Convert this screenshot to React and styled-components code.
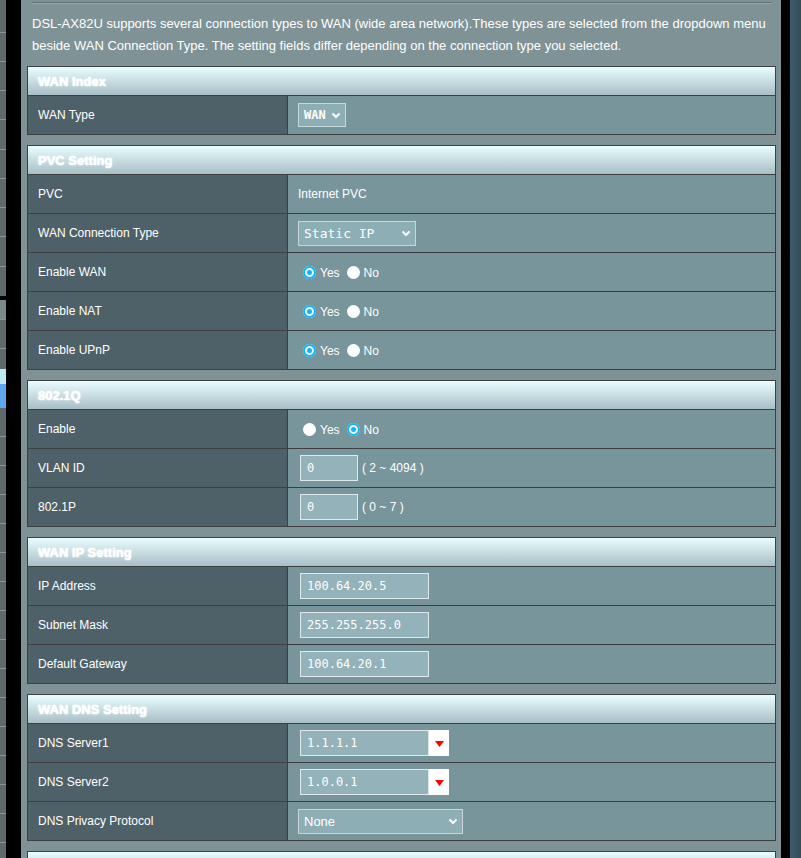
import React from "react";
import styled, { createGlobalStyle } from "styled-components";

const GlobalStyle = createGlobalStyle`
  html, body { margin: 0; padding: 0; background: #000; }
  body { font-family: "Liberation Sans", Arial, sans-serif; overflow: hidden; }
  * { box-sizing: border-box; }
`;

const Frame = styled.div`
  display: flex;
  width: 801px;
  height: 858px;
  overflow: hidden;
  background: #000;
`;

const SideMenu = styled.div`
  width: 6px;
  display: flex;
  flex-direction: column;
  flex: none;
`;

const MenuGroup = styled.div`
  display: flex;
  flex-direction: column;
  background: #5e6a6b;
  margin-top: ${(p) => p.$gap || 0}px;
  border-radius: ${(p) => (p.$rounded ? "0 4px 0 0" : "0")};
  flex: ${(p) => (p.$grow ? 1 : "none")};
`;

const MenuItem = styled.div`
  height: ${(p) => p.$h}px;
  flex: none;
  background: ${(p) => p.$bg || "#5e6a6b"};
  border-bottom: ${(p) => (p.$line ? "1px solid #8a9597" : "none")};
`;

const Spacer = styled.div`
  width: ${(p) => p.$w}px;
  flex: none;
  background: ${(p) => p.$bg || "#000"};
`;

const Main = styled.main`
  width: 760px;
  flex: none;
  background: #7f9296;
  padding: 2px 5px 0 6px;
`;

const TopRule = styled.div`
  height: 1px;
  margin: 0 4px 0 5px;
  background: #5f6e72;
  box-shadow: 0 1px 0 #9aa8ab;
`;

const Description = styled.p`
  margin: 10px 4px 9px 5px;
  color: #fff;
  font-size: 13px;
  line-height: 22px;
`;

const Table = styled.section`
  width: 749px;
  border: 1px solid #3d3f40;
  margin-bottom: 10px;
`;

const Header = styled.div`
  height: 29px;
  border-bottom: 1px solid #3d3f40;
  background: linear-gradient(#e9feff, #a8bec6);
  color: #fff;
  font-weight: bold;
  font-size: 13px;
  padding-left: 10px;
  display: flex;
  align-items: center;
  text-shadow: 0 0 1px #ffffff, 0 0 2px #ffffff;
`;

const Row = styled.div`
  display: grid;
  grid-template-columns: 260px 1fr;
  height: 39px;
  border-bottom: 1px solid #3d3f40;
  &:last-child { border-bottom: none; height: 38px; }
`;

const Label = styled.div`
  background: #4f6168;
  border-right: 1px solid #3d3f40;
  color: #fff;
  font-size: 12px;
  padding-left: 10px;
  display: flex;
  align-items: center;
`;

const Value = styled.div`
  background: #78959b;
  color: #fff;
  font-size: 12px;
  padding-left: 10px;
  display: flex;
  align-items: center;
`;

const SelectBox = styled.div`
  width: ${(p) => p.$w}px;
  height: ${(p) => p.$h || 25}px;
  border: 1px solid #c8d6d9;
  background: #8eaeb5;
  color: #fff;
  display: flex;
  align-items: center;
  justify-content: space-between;
  padding: 0 4px 0 5px;
  font-family: ${(p) => (p.$mono ? '"DejaVu Sans Mono", "Liberation Mono", monospace' : '"Liberation Sans", Arial, sans-serif')};
  font-size: ${(p) => p.$fs || 12}px;
  font-weight: ${(p) => (p.$bold ? "bold" : "normal")};
`;

const TextInput = styled.div`
  width: ${(p) => p.$w}px;
  height: 26px;
  margin-left: 2px;
  border: 1px solid #dfe9eb;
  background: #93b2b9;
  color: #fff;
  font-family: "DejaVu Sans Mono", "Liberation Mono", monospace;
  font-size: 12px;
  display: flex;
  align-items: center;
  padding-left: 6px;
`;

const Hint = styled.span`
  margin-left: 4px;
  font-size: 12px;
  color: #fff;
`;

const Combo = styled.div`
  display: flex;
  margin-left: 2px;
`;

const ComboInput = styled(TextInput)`
  margin-left: 0;
`;

const ComboArrow = styled.div`
  width: 20px;
  height: 26px;
  background: #fff;
  display: flex;
  align-items: center;
  justify-content: center;
  padding-top: 2px;
`;

const RadioGroup = styled.div`
  display: flex;
  align-items: center;
  padding-left: 5px;
`;

const RadioDot = styled.span`
  width: 13px;
  height: 13px;
  border-radius: 50%;
  flex: none;
  background: ${(p) => (p.$checked ? "#17b1f6" : "#fff")};
  box-shadow: ${(p) => (p.$checked ? "inset 0 0 0 2px #17b1f6, inset 0 0 0 4px #e8f8ff" : "none")};
  margin-right: 4px;
`;

const RadioText = styled.span`
  font-size: 12px;
  color: #fff;
  margin-right: 7px;
  padding-top: 2px;
`;

const Chevron = () => (
  <svg width="10" height="7" viewBox="0 0 10 7">
    <polyline points="1.5,1.5 5,5 8.5,1.5" fill="none" stroke="#fff" strokeWidth="2" />
  </svg>
);

const RedArrow = () => (
  <svg width="9" height="6" viewBox="0 0 9 6">
    <polygon points="0,0 9,0 4.5,6" fill="#ff0000" />
  </svg>
);

const Radios = ({ yes }) => (
  <RadioGroup>
    <RadioDot $checked={yes} />
    <RadioText>Yes</RadioText>
    <RadioDot $checked={!yes} />
    <RadioText>No</RadioText>
  </RadioGroup>
);

const sections = [
  {
    title: "WAN Index",
    rows: [
      ["WAN Type", <SelectBox $w={48} $h={24} $mono $bold $fs={12}>WAN<Chevron /></SelectBox>],
    ],
  },
  {
    title: "PVC Setting",
    rows: [
      ["PVC", "Internet PVC"],
      ["WAN Connection Type", <SelectBox $w={118} $mono $fs={13}>Static IP<Chevron /></SelectBox>],
      ["Enable WAN", <Radios yes />],
      ["Enable NAT", <Radios yes />],
      ["Enable UPnP", <Radios yes />],
    ],
  },
  {
    title: "802.1Q",
    rows: [
      ["Enable", <Radios yes={false} />],
      ["VLAN ID", <><TextInput $w={58}>0</TextInput><Hint>( 2 ~ 4094 )</Hint></>],
      ["802.1P", <><TextInput $w={58}>0</TextInput><Hint>( 0 ~ 7 )</Hint></>],
    ],
  },
  {
    title: "WAN IP Setting",
    rows: [
      ["IP Address", <TextInput $w={129}>100.64.20.5</TextInput>],
      ["Subnet Mask", <TextInput $w={129}>255.255.255.0</TextInput>],
      ["Default Gateway", <TextInput $w={129}>100.64.20.1</TextInput>],
    ],
  },
  {
    title: "WAN DNS Setting",
    rows: [
      ["DNS Server1", <Combo><ComboInput $w={129}>1.1.1.1</ComboInput><ComboArrow><RedArrow /></ComboArrow></Combo>],
      ["DNS Server2", <Combo><ComboInput $w={129}>1.0.0.1</ComboInput><ComboArrow><RedArrow /></ComboArrow></Combo>],
      ["DNS Privacy Protocol", <SelectBox $w={165} $fs={13}>None<Chevron /></SelectBox>],
    ],
  },
];

const topItems = [33, 29, 29, 29, 30, 29, 29, 29, 30, 29];
const bottomItems = [
  { h: 20, bg: "#7c898b", line: true },
  { h: 29, line: true },
  { h: 20 },
  { h: 15, bg: "#bfe9f2" },
  { h: 24, bg: "#5ea8f0" },
  ...Array.from({ length: 16 }, () => ({ h: 29, line: true })),
];

export default function App() {
  return (
    <>
      <GlobalStyle />
      <Frame>
        <SideMenu>
          <MenuGroup>
            {topItems.map((h, i) => (
              <MenuItem key={i} $h={h} $line={i < topItems.length - 1} />
            ))}
          </MenuGroup>
          <MenuGroup $gap={4} $rounded $grow>
            {bottomItems.map((it, i) => (
              <MenuItem key={i} $h={it.h} $bg={it.bg} $line={it.line} />
            ))}
          </MenuGroup>
        </SideMenu>
        <Spacer $w={15} />
        <Main>
          <TopRule />
          <Description>
            DSL-AX82U supports several connection types to WAN (wide area network).These types are selected from the dropdown menu beside WAN Connection Type. The setting fields differ depending on the connection type you selected.
          </Description>
          {sections.map((s) => (
            <Table key={s.title}>
              <Header>{s.title}</Header>
              {s.rows.map(([label, value]) => (
                <Row key={label}>
                  <Label>{label}</Label>
                  <Value>{value}</Value>
                </Row>
              ))}
            </Table>
          ))}
          <Table>
            <Header />
          </Table>
        </Main>
        <Spacer $w={9} />
        <Spacer $w={11} $bg="linear-gradient(90deg, #3f5a6b, #344d5d)" />
      </Frame>
    </>
  );
}
